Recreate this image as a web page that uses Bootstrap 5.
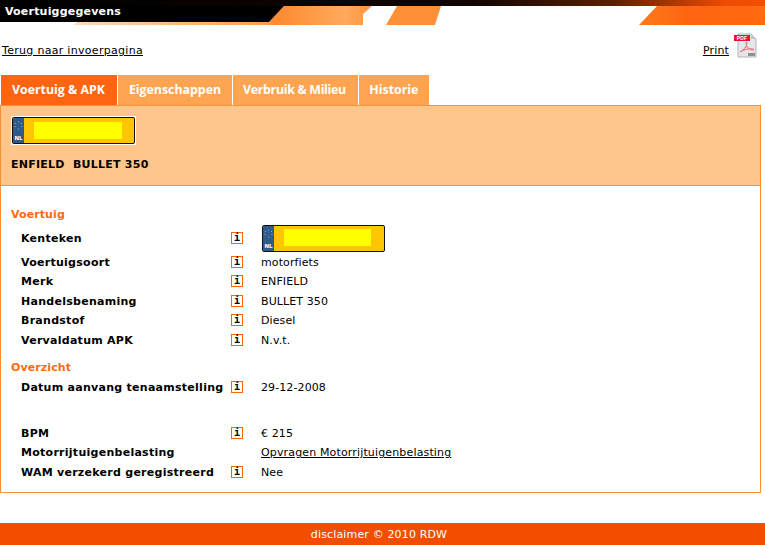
<!DOCTYPE html>
<html lang="nl">
<head>
<meta charset="utf-8">
<title>Voertuiggegevens</title>
<link href="https://cdn.jsdelivr.net/npm/bootstrap@5.3.0/dist/css/bootstrap.min.css" rel="stylesheet">
<style>
html,body{height:100%}
body{font-family:"DejaVu Sans",Verdana,sans-serif;font-size:11px;line-height:14px;letter-spacing:.1px;color:#000;background:#fff;width:765px;height:545px;overflow:hidden}
a{color:#000;letter-spacing:.3px}
a.print-link{letter-spacing:.15px}
a.tax-link{letter-spacing:.15px}
.banner{height:25px}
.banner-art{position:absolute;inset:0;width:765px;height:25px}
.banner-title{position:relative;font-weight:700;color:#fff;padding:5px 0 0 5px;letter-spacing:.2px}
.toplinks{height:50px;padding:19px 8px 0 2px}
.pdf-icon{width:24px;height:26px;margin:-11px 0 0 4px;flex:none}
.tabbar{height:30px;gap:1px;padding-left:1px}
.tabitem{height:30px;background:#ffa552;color:#fff;font:700 12.35px/30px "Open Sans",sans-serif;letter-spacing:0;padding:0 10.5px;text-decoration:none}
.tabitem.on{background:#ff6412;padding-left:11px;padding-right:12.5px}
.tabitem.tight{letter-spacing:-.3px;padding-right:12px}
.panel-box{width:761px;height:388px;border:1px solid #ff8f33}
.panel-head{height:80px;background:#ffc68b;border-bottom:1px solid #ff8f33;padding:10px 10px 0}
.plate-frame{border:1px solid #fff;width:125px;height:29px}
.plate{height:100%;border:1px solid #111;border-radius:2px;background:#fec600;overflow:hidden}
.plate-blue{width:11px;background:#2f5a90;color:#fff;font-size:5.5px;line-height:8px;font-weight:700;flex:none;padding-bottom:1px;letter-spacing:0}
.plate-stars{width:9px;height:9px;margin-top:3px}
.plate-yellow{background:#ff0;margin:4px 12px 4px 10px;flex:1}
.vehicle{font-weight:700;margin-top:13px;white-space:pre;letter-spacing:.25px}
.panel-body{padding:22px 0 0 10px}
.section-title{color:#ff6a10;font-weight:700;height:14px;letter-spacing:.1px}
.info-row{height:19.5px}
.label-cell{width:220px;padding-left:10px;font-weight:700;flex:none;white-space:nowrap;letter-spacing:.27px}
.i-cell{width:30px;flex:none;margin-bottom:2px}
.i-box{display:block;width:12px;height:12px;border:1px solid #ff6600;font:700 10px/10px "DejaVu Sans Mono",monospace;text-align:center;color:#000}
.row-plate{height:28px;margin-top:3px}
.plate-small{width:123px;height:27px;margin:0 0 2px 1px}
.plate-small .plate-yellow{margin:3px 13px 5px 10px}
.section-gap{margin-top:10px}
.row-gap{margin-top:26px}
.page-foot{margin-top:30px;height:22px;background:#f34d00;color:#fff;line-height:23px;letter-spacing:.15px;padding-right:7px}
</style>
</head>
<body>
<svg width="0" height="0" class="position-absolute" aria-hidden="true"><symbol id="stars" viewBox="0 0 9 9"><g fill="#8fc4a0"><circle cx="4.5" cy="1" r=".6"/><circle cx="7.5" cy="2.5" r=".6"/><circle cx="8" cy="5.5" r=".6"/><circle cx="4.5" cy="8" r=".6"/><circle cx="1" cy="5.5" r=".6"/><circle cx="1.5" cy="2.5" r=".6"/></g></symbol></svg>
<header class="banner position-relative">
<svg class="banner-art" viewBox="0 0 765 25" aria-hidden="true">
<defs>
<linearGradient id="top" x1="0" x2="1"><stop offset="0" stop-color="#000"/><stop offset=".62" stop-color="#120500"/><stop offset=".8" stop-color="#5a2000"/><stop offset=".95" stop-color="#f04c00"/><stop offset="1" stop-color="#f34d00"/></linearGradient>
<linearGradient id="peach" x1="0" x2="1"><stop offset="0" stop-color="#ffdcb8"/><stop offset="1" stop-color="#ff9a45"/></linearGradient>
<linearGradient id="oran" gradientUnits="userSpaceOnUse" x1="280" x2="441" y1="0" y2="0"><stop offset="0" stop-color="#ff8c33"/><stop offset=".4" stop-color="#ffa95e"/><stop offset=".6" stop-color="#ff9038"/><stop offset="1" stop-color="#ff9038"/></linearGradient>
<linearGradient id="oran2" x1="0" x2="1"><stop offset="0" stop-color="#ff7a1c"/><stop offset=".4" stop-color="#ff6410"/><stop offset="1" stop-color="#ff6a10"/></linearGradient>
</defs>
<rect width="765" height="6" fill="url(#top)"/>
<polygon points="266,25 284,6 372,6 363,14 363,25" fill="url(#oran)"/>
<polygon points="73,25 78,22 272,22 270,25" fill="url(#peach)"/>
<polygon points="397,6 441,6 435,25 386,25" fill="url(#oran)"/>
<polygon points="657,6 765,6 765,25 639,25" fill="url(#oran2)"/>
<polygon points="0,6 284,6 269,22 0,22" fill="#000"/>
</svg>
<div class="banner-title">Voertuiggegevens</div>
</header>

<div class="toplinks d-flex justify-content-between">
<a href="#">Terug naar invoerpagina</a>
<div class="d-flex align-items-start">
<a class="print-link" href="#">Print</a>
<svg class="pdf-icon" viewBox="0 0 24 26" aria-hidden="true">
<polygon points="5,1 18,1 23,6 23,24 5,24" fill="#e6e6ea" stroke="#b4b4bc"/>
<polygon points="18,1 18,6 23,6" fill="#c4c4cc"/>
<rect x="1" y="2" width="16" height="6" fill="#e8142c"/>
<text x="9" y="7" font-size="5" font-weight="700" fill="#fff" text-anchor="middle" font-family="Liberation Sans">PDF</text>
<path d="M7 19C11 17 14 13 14 10c0-1-1-1-1 0 0 4 3 7 7 7 1 0 1-1 0-1-4-1-9 1-13 3z" fill="none" stroke="#ee8088" stroke-width="1.2"/>
<rect x="15" y="20" width="7" height="3" fill="#8e8e96"/>
</svg>
</div>
</div>

<nav class="tabbar d-flex">
<a class="tabitem on" href="#">Voertuig &amp; APK</a>
<a class="tabitem" href="#">Eigenschappen</a>
<a class="tabitem tight" href="#">Verbruik &amp; Milieu</a>
<a class="tabitem" href="#">Historie</a>
</nav>

<main class="panel-box">
<div class="panel-head">
<div class="plate-frame"><div class="plate d-flex"><div class="plate-blue d-flex flex-column align-items-center justify-content-between"><svg class="plate-stars"><use href="#stars"/></svg>NL</div><div class="plate-yellow"></div></div></div>
<div class="vehicle">ENFIELD  BULLET 350</div>
</div>
<div class="panel-body">
<div class="section-title">Voertuig</div>
<div class="info-row row-plate d-flex align-items-center"><div class="label-cell">Kenteken</div><div class="i-cell"><span class="i-box">i</span></div><div class="plate-small"><div class="plate d-flex"><div class="plate-blue d-flex flex-column align-items-center justify-content-between"><svg class="plate-stars"><use href="#stars"/></svg>NL</div><div class="plate-yellow"></div></div></div></div>
<div class="info-row d-flex align-items-center"><div class="label-cell">Voertuigsoort</div><div class="i-cell"><span class="i-box">i</span></div><div>motorfiets</div></div>
<div class="info-row d-flex align-items-center"><div class="label-cell">Merk</div><div class="i-cell"><span class="i-box">i</span></div><div>ENFIELD</div></div>
<div class="info-row d-flex align-items-center"><div class="label-cell">Handelsbenaming</div><div class="i-cell"><span class="i-box">i</span></div><div>BULLET 350</div></div>
<div class="info-row d-flex align-items-center"><div class="label-cell">Brandstof</div><div class="i-cell"><span class="i-box">i</span></div><div>Diesel</div></div>
<div class="info-row d-flex align-items-center"><div class="label-cell">Vervaldatum APK</div><div class="i-cell"><span class="i-box">i</span></div><div>N.v.t.</div></div>
<div class="section-title section-gap">Overzicht</div>
<div class="info-row mt-1 d-flex align-items-center"><div class="label-cell">Datum aanvang tenaamstelling</div><div class="i-cell"><span class="i-box">i</span></div><div>29-12-2008</div></div>
<div class="info-row row-gap d-flex align-items-center"><div class="label-cell">BPM</div><div class="i-cell"><span class="i-box">i</span></div><div>€ 215</div></div>
<div class="info-row d-flex align-items-center"><div class="label-cell">Motorrijtuigenbelasting</div><div class="i-cell"></div><div><a class="tax-link" href="#">Opvragen Motorrijtuigenbelasting</a></div></div>
<div class="info-row d-flex align-items-center"><div class="label-cell">WAM verzekerd geregistreerd</div><div class="i-cell"><span class="i-box">i</span></div><div>Nee</div></div>
</div>
</main>
<footer class="page-foot text-center">disclaimer © 2010 RDW</footer>
</body>
</html>
